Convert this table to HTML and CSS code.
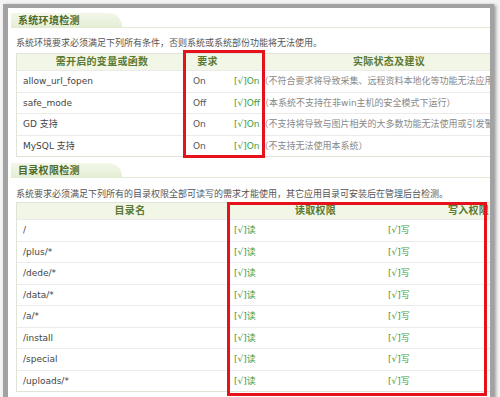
FILE: index.html
```html
<!DOCTYPE html>
<html lang="zh-CN">
<head>
<meta charset="utf-8">
<title>系统环境检测</title>
<link rel="stylesheet" href="styles.css">
</head>
<body>
<div class="window">
  <div class="content">
    <div class="tab"><span class="tab-label">系统环境检测</span></div>
    <p class="desc">系统环境要求必须满足下列所有条件，否则系统或系统部份功能将无法使用。</p>
    <table class="grid env">
      <colgroup><col class="c-var"><col class="c-req"><col class="c-state"></colgroup>
      <thead>
        <tr><th class="h-var">需开启的变量或函数</th><th>要求</th><th class="h-state">实际状态及建议</th></tr>
      </thead>
      <tbody>
        <tr><td class="name">allow_url_fopen</td><td class="req">On</td><td><span class="ok">[√]On</span><span class="note">（不符合要求将导致采集、远程资料本地化等功能无法应用）</span></td></tr>
        <tr><td class="name">safe_mode</td><td class="req">Off</td><td><span class="ok">[√]Off</span><span class="note">（本系统不支持在非win主机的安全模式下运行）</span></td></tr>
        <tr><td class="name">GD 支持</td><td class="req">On</td><td><span class="ok">[√]On</span><span class="note">（不支持将导致与图片相关的大多数功能无法使用或引发警告）</span></td></tr>
        <tr><td class="name">MySQL 支持</td><td class="req">On</td><td><span class="ok">[√]On</span><span class="note">（不支持无法使用本系统）</span></td></tr>
      </tbody>
    </table>

    <div class="tab tab-second"><span class="tab-label">目录权限检测</span></div>
    <p class="desc desc-second">系统要求必须满足下列所有的目录权限全部可读写的需求才能使用，其它应用目录可安装后在管理后台检测。</p>
    <table class="grid dir">
      <colgroup><col class="c-dir"><col class="c-read"><col class="c-write"></colgroup>
      <thead>
        <tr><th class="h-dir">目录名</th><th class="h-perm">读取权限</th><th class="h-perm">写入权限</th></tr>
      </thead>
      <tbody>
        <tr><td class="name">/</td><td><span class="ok">[√]读</span></td><td class="w"><span class="ok">[√]写</span></td></tr>
        <tr><td class="name">/plus/*</td><td><span class="ok">[√]读</span></td><td class="w"><span class="ok">[√]写</span></td></tr>
        <tr><td class="name">/dede/*</td><td><span class="ok">[√]读</span></td><td class="w"><span class="ok">[√]写</span></td></tr>
        <tr><td class="name">/data/*</td><td><span class="ok">[√]读</span></td><td class="w"><span class="ok">[√]写</span></td></tr>
        <tr><td class="name">/a/*</td><td><span class="ok">[√]读</span></td><td class="w"><span class="ok">[√]写</span></td></tr>
        <tr><td class="name">/install</td><td><span class="ok">[√]读</span></td><td class="w"><span class="ok">[√]写</span></td></tr>
        <tr><td class="name">/special</td><td><span class="ok">[√]读</span></td><td class="w"><span class="ok">[√]写</span></td></tr>
        <tr><td class="name">/uploads/*</td><td><span class="ok">[√]读</span></td><td class="w"><span class="ok">[√]写</span></td></tr>
      </tbody>
    </table>
  </div>
  <div class="mark mark-env"></div>
  <div class="mark mark-dir"></div>
</div>
</body>
</html>
```

FILE: styles.css
```css
html, body {
  margin: 0;
  padding: 0;
}
body {
  background: #f3f3f3;
  font-family: "DejaVu Sans", "Noto Sans CJK SC", sans-serif;
  font-size: 9px;
  color: #555;
  overflow: hidden;
  height: 397px;
}
.window {
  position: relative;
  margin: 4px 0 0 3px;
  width: 482px;
  height: 420px;
  background: #fff;
  border: 4px solid #a2a2a2;
  border-left-width: 5px;
  box-shadow: 2px 1px 3px rgba(0, 0, 0, 0.35);
  overflow: hidden;
}
.content {
  padding: 5px 0 0 3px;
}
.tab {
  display: flex;
  height: 14px;
  border-bottom: 1px solid #e2ecd3;
  margin-right: 0;
}
.tab-label {
  width: 104px;
  padding-left: 7px;
  line-height: 15px;
  background: linear-gradient(#f3f7ea, #e4eed5);
  border-top-right-radius: 14px 15px;
  color: #4d6a29;
  font-weight: bold;
  font-size: 10px;
  letter-spacing: 0.3px;
}
.tab-second {
  margin-top: 6px;
}
.desc {
  margin: 8px 0 3px 5px;
  line-height: 14px;
  color: #555;
  white-space: nowrap;
}
.desc-second {
  margin-top: 9px;
  margin-bottom: 1px;
}
.grid {
  margin-left: 5px;
  width: 517px;
  table-layout: fixed;
  border-collapse: separate;
  border-spacing: 0;
  border: 1px solid #dfe4d8;
}
.c-var { width: 170px; }
.c-req { width: 41px; }
.c-state { width: 306px; }
.c-dir { width: 211px; }
.c-read { width: 153px; }
.c-write { width: 153px; }
.grid th {
  padding: 0;
  height: 16px;
  line-height: 16px;
  background: #f1f6e6;
  color: #5a7932;
  font-weight: bold;
  font-size: 10px;
  letter-spacing: 0.3px;
  text-align: center;
  white-space: nowrap;
}
.grid th.h-state { padding-left: 16px; }
.grid th.h-dir { padding-left: 15px; }
.grid th.h-perm { padding-left: 22px; }
.grid td {
  padding: 0 0 0 6px;
  height: 20.5px;
  line-height: 20.5px;
  border-top: 1px solid #ebebeb;
  white-space: nowrap;
  overflow: hidden;
}
.grid td.w { padding-left: 7px; }
.name { color: #444; }
.req { color: #555; }
.ok { color: #3f9c3f; }
.note { color: #888; }
.mark {
  position: absolute;
  border: 3px solid #e5121b;
}
.mark-env {
  left: 175px;
  top: 42px;
  width: 76px;
  height: 102px;
}
.mark-dir {
  left: 219px;
  top: 194px;
  width: 254px;
  height: 188px;
}
```
